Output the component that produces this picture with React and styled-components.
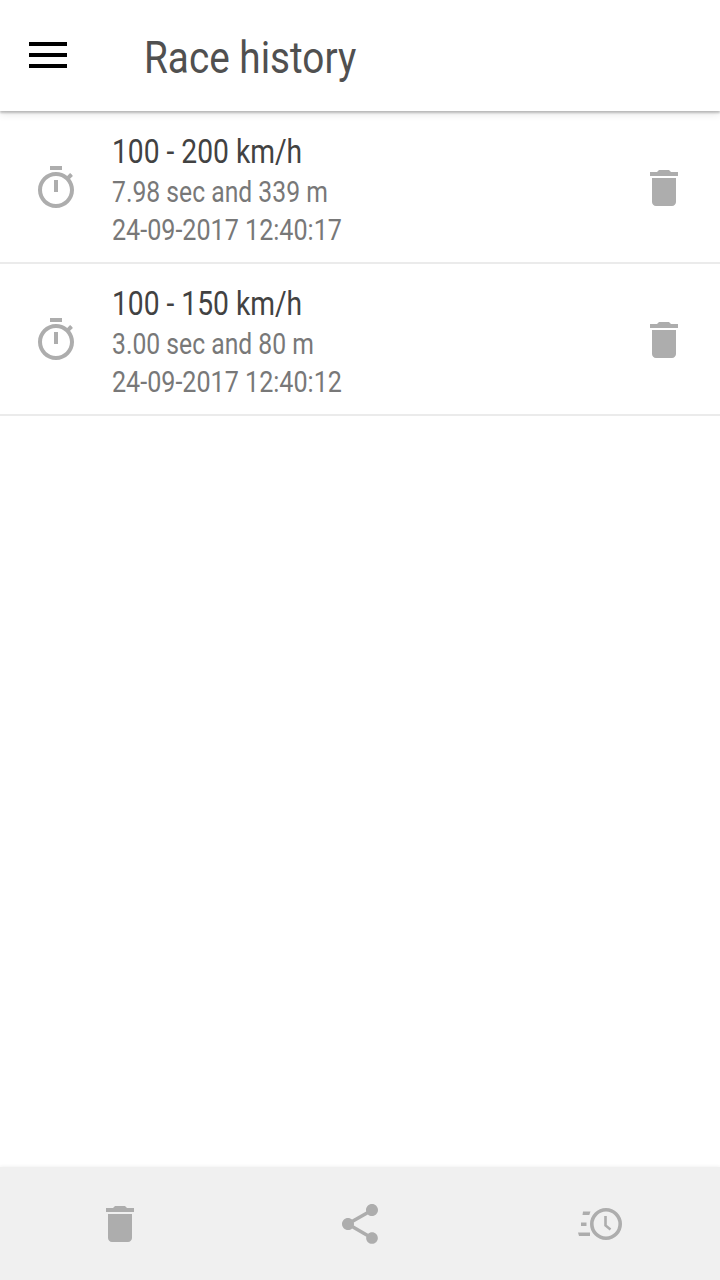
import React from "react";
import styled, { createGlobalStyle } from "styled-components";

const Global = createGlobalStyle`
  html, body { margin: 0; padding: 0; background: #fff; }
  #root { width: 720px; height: 1280px; }
`;

const Page = styled.div`
  width: 720px;
  height: 1280px;
  display: flex;
  flex-direction: column;
  background: #fff;
  font-family: Roboto, "Liberation Sans", sans-serif;
  overflow: hidden;
`;

const Header = styled.header`
  height: 111px;
  flex: none;
  display: flex;
  align-items: center;
  background: #fff;
  box-shadow: 0 2px 2px rgba(0, 0, 0, 0.22), 0 3px 8px rgba(0, 0, 0, 0.1);
  position: relative;
  z-index: 1;
`;

const MenuButton = styled.div`
  width: 38px;
  height: 26px;
  margin: -1px 0 0 29px;
  display: flex;
  flex-direction: column;
  justify-content: space-between;
  flex: none;
`;

const MenuBar = styled.span`
  display: block;
  height: 4px;
  background: #000;
`;

const Title = styled.h1`
  margin: 5px 0 0 77px;
  font-size: 44px;
  line-height: 52px;
  font-weight: 400;
  color: #505050;
  white-space: nowrap;
  transform: scaleX(0.88);
  transform-origin: left center;
`;

const List = styled.main`
  flex: 1;
  min-height: 0;
  padding-top: 1px;
`;

const Row = styled.article`
  box-sizing: border-box;
  height: 152px;
  display: flex;
  align-items: center;
  border-bottom: 2px solid #ebebeb;
  padding: 2px 32px 0;
`;

const RowText = styled.div`
  flex: 1;
  margin: 4px 0 0 32px;
  display: flex;
  flex-direction: column;
`;

const RowTitle = styled.div`
  font-size: 33px;
  line-height: 42px;
  color: #424242;
  white-space: nowrap;
  transform: scaleX(0.855);
  transform-origin: left center;
`;

const RowLine = styled.div`
  font-size: 29px;
  line-height: 38px;
  color: #787878;
  white-space: nowrap;
  transform: scaleX(${(p) => p.$stretch});
  transform-origin: left center;
`;

const Toolbar = styled.footer`
  height: 113px;
  flex: none;
  background: #f0f0f0;
  box-shadow: 0 -1px 3px rgba(0, 0, 0, 0.05);
  display: grid;
  grid-template-columns: repeat(3, 240px);
  justify-items: center;
  align-items: center;
`;

const Icon = styled.svg`
  width: 48px;
  height: 48px;
  flex: none;
  display: block;
  fill: #adadad;
`;

const TimerIcon = () => (
  <Icon viewBox="0 0 24 24">
    <path d="M15 1H9v2h6V1zm-4 13h2V8h-2v6zm8.03-6.61l1.42-1.42c-.43-.51-.9-.99-1.41-1.41l-1.42 1.42C16.07 4.74 14.12 4 12 4c-4.97 0-9 4.03-9 9s4.03 9 9 9 9-4.03 9-9c0-2.12-.74-4.07-1.97-5.61zM12 20c-3.87 0-7-3.13-7-7s3.13-7 7-7 7 3.13 7 7-3.13 7-7 7z" />
  </Icon>
);

const TrashIcon = () => (
  <Icon viewBox="0 0 24 24">
    <path d="M6 19c0 1.1.9 2 2 2h8c1.1 0 2-.9 2-2V7H6v12zM19 4h-3.5l-1-1h-5l-1 1H5v2h14V4z" />
  </Icon>
);

const ShareIcon = () => (
  <Icon viewBox="0 0 24 24">
    <path d="M18 16.08c-.76 0-1.44.3-1.96.77L8.91 12.7c.05-.23.09-.46.09-.7s-.04-.47-.09-.7l7.05-4.11c.54.5 1.25.81 2.04.81 1.66 0 3-1.34 3-3s-1.34-3-3-3-3 1.34-3 3c0 .24.04.47.09.7L8.04 9.81C7.5 9.31 6.79 9 6 9c-1.66 0-3 1.34-3 3s1.34 3 3 3c.79 0 1.5-.31 2.04-.81l7.12 4.16c-.05.21-.08.43-.08.65 0 1.61 1.31 2.92 2.92 2.92 1.61 0 2.92-1.31 2.92-2.92s-1.31-2.92-2.92-2.92z" />
  </Icon>
);

const RaceHistoryIcon = () => (
  <Icon viewBox="0 0 48 48">
    <circle cx="30" cy="24" r="14.2" fill="none" stroke="#adadad" strokeWidth="3.6" />
    <path d="M29.5 16v9.5l5 4" fill="none" stroke="#adadad" strokeWidth="2.6" />
    <path d="M7 11.5h7.5l-1.2 3.5H6.5z M5 22.5h5.5v3.5H5z M2 32.5h12v3.5H3z" />
  </Icon>
);

const races = [
  { title: "100 - 200 km/h", result: "7.98 sec and 339 m", date: "24-09-2017 12:40:17" },
  { title: "100 - 150 km/h", result: "3.00 sec and 80 m", date: "24-09-2017 12:40:12" },
];

export default function App() {
  return (
    <Page>
      <Global />
      <Header>
        <MenuButton>
          <MenuBar />
          <MenuBar />
          <MenuBar />
        </MenuButton>
        <Title>Race history</Title>
      </Header>
      <List>
        {races.map((race) => (
          <Row key={race.date}>
            <TimerIcon />
            <RowText>
              <RowTitle>{race.title}</RowTitle>
              <RowLine $stretch={0.852}>{race.result}</RowLine>
              <RowLine $stretch={0.866}>{race.date}</RowLine>
            </RowText>
            <TrashIcon />
          </Row>
        ))}
      </List>
      <Toolbar>
        <TrashIcon />
        <ShareIcon />
        <RaceHistoryIcon />
      </Toolbar>
    </Page>
  );
}
